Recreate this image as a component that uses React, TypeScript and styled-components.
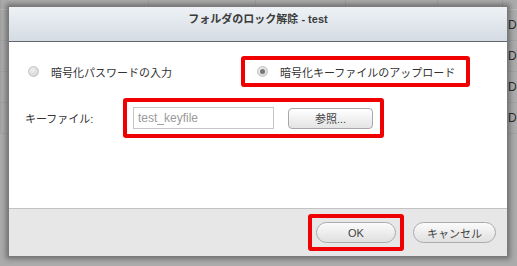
import React from "react";
import styled, { createGlobalStyle } from "styled-components";

const Global = createGlobalStyle`
  html, body { margin: 0; padding: 0; }
  body {
    width: 517px;
    height: 266px;
    overflow: hidden;
    background: #ababab;
    font-family: "Liberation Sans", "Noto Sans CJK JP", sans-serif;
  }
`;

const Page = styled.div`
  position: relative;
  width: 517px;
  height: 266px;
  background: #ababab;
  overflow: hidden;
`;

const BgTable = styled.div`
  display: grid;
  grid-template-columns: 148px 107px 90px 92px 65px 1fr;
  grid-template-rows: 10px repeat(4, 31px);
`;

const BgCell = styled.div<{ $head?: boolean }>`
  border-left: 1px solid #a0a0a0;
  border-bottom: 1px solid ${(p) => (p.$head ? "#b8b8b8" : "#a2a2a2")};
  box-sizing: border-box;
  font-size: 12px;
  color: #2e2e2e;
  display: flex;
  align-items: center;
  padding-left: 5px;
  white-space: nowrap;
  overflow: hidden;
`;

const Dialog = styled.div`
  position: absolute;
  left: 8px;
  top: 6px;
  width: 500px;
  height: 251px;
  box-sizing: border-box;
  display: flex;
  flex-direction: column;
  background: #fff;
  border: 1px solid #7a7a7a;
  box-shadow: 0 0 5px 2px rgba(0, 0, 0, 0.35);
`;

const TitleBar = styled.div`
  height: 35px;
  flex: none;
  border-bottom: 1px solid #62676d;
  background: linear-gradient(#eef2f6, #d4dbe3);
  display: flex;
  justify-content: center;
  padding-top: 5px;
  box-sizing: border-box;
  font-size: 11px;
  line-height: 14px;
  font-weight: bold;
  color: #3b3b3b;
`;

const Body = styled.div`
  flex: 1;
  display: flex;
  flex-direction: column;
  gap: 11px;
  padding-top: 14px;
`;

const ChoiceRow = styled.div`
  display: grid;
  grid-template-columns: 213px auto;
  align-items: center;
  padding-left: 19px;
`;

const FileRow = styled.div`
  display: grid;
  grid-template-columns: 98px auto;
  align-items: center;
  padding-left: 16px;
`;

const Highlight = styled.div<{ $pad: string }>`
  border: 4px solid #f00000;
  border-radius: 3px;
  display: flex;
  align-items: center;
  justify-self: start;
  padding: ${(p) => p.$pad};
  gap: 14px;
`;

const RadioOption = styled.label`
  display: flex;
  align-items: center;
  gap: 12px;
  font-size: 11px;
  color: #333;
  height: 23px;
`;

const RadioDot = styled.span<{ $checked?: boolean }>`
  width: 11px;
  height: 11px;
  border-radius: 50%;
  box-sizing: border-box;
  border: 1px solid #c4c4c4;
  background: radial-gradient(circle at 40% 35%, #f0f0f0, #cfcfcf);
  display: flex;
  align-items: center;
  justify-content: center;
  &::after {
    content: "";
    width: 5px;
    height: 5px;
    border-radius: 50%;
    background: ${(p) => (p.$checked ? "#777" : "transparent")};
  }
`;

const FieldLabel = styled.span`
  font-size: 11px;
  color: #333;
`;

const TextInput = styled.div`
  width: 141px;
  height: 22px;
  box-sizing: border-box;
  border: 1px solid #c6c6c6;
  padding-left: 4px;
  font-size: 12px;
  color: #9a9a9a;
  display: flex;
  align-items: center;
`;

const BrowseButton = styled.button`
  width: 85px;
  height: 21px;
  box-sizing: border-box;
  border: 1px solid #a8a8a8;
  border-radius: 4px;
  background: linear-gradient(#ffffff, #e4e4e4);
  font-family: inherit;
  font-size: 11px;
  color: #444;
  padding: 0;
`;

const Footer = styled.div`
  height: 48px;
  flex: none;
  box-sizing: border-box;
  border-top: 1px solid #c2c2c2;
  background: #e7e7e7;
  display: flex;
  justify-content: flex-end;
  align-items: center;
  gap: 9px;
  padding-right: 11px;
`;

const PillButton = styled.button`
  width: ${(p: { $w: number }) => p.$w}px;
  height: 21px;
  box-sizing: border-box;
  border: 1px solid #ababab;
  border-radius: 11px;
  background: linear-gradient(#fbfbfb, #e0e0e0);
  font-family: inherit;
  font-size: 11px;
  color: #444;
  padding: 0;
`;

const cols = ["", "", "", "", "", "Da"];

export default function App() {
  return (
    <Page>
      <Global />
      <BgTable>
        {cols.map((_, i) => (
          <BgCell key={`h${i}`} $head />
        ))}
        {[0, 1, 2, 3].map((r) =>
          cols.map((c, i) => <BgCell key={`${r}-${i}`}>{c}</BgCell>)
        )}
      </BgTable>
      <Dialog>
        <TitleBar>フォルダのロック解除 - test</TitleBar>
        <Body>
          <ChoiceRow>
            <RadioOption>
              <RadioDot />
              暗号化パスワードの入力
            </RadioOption>
            <Highlight $pad="0 11px 0 12px">
              <RadioOption>
                <RadioDot $checked />
                暗号化キーファイルのアップロード
              </RadioOption>
            </Highlight>
          </ChoiceRow>
          <FileRow>
            <FieldLabel>キーファイル:</FieldLabel>
            <Highlight $pad="5px 7px 5px 6px">
              <TextInput>test_keyfile</TextInput>
              <BrowseButton>参照...</BrowseButton>
            </Highlight>
          </FileRow>
        </Body>
        <Footer>
          <Highlight $pad="4px 4px">
            <PillButton $w={80}>OK</PillButton>
          </Highlight>
          <PillButton $w={83}>キャンセル</PillButton>
        </Footer>
      </Dialog>
    </Page>
  );
}
